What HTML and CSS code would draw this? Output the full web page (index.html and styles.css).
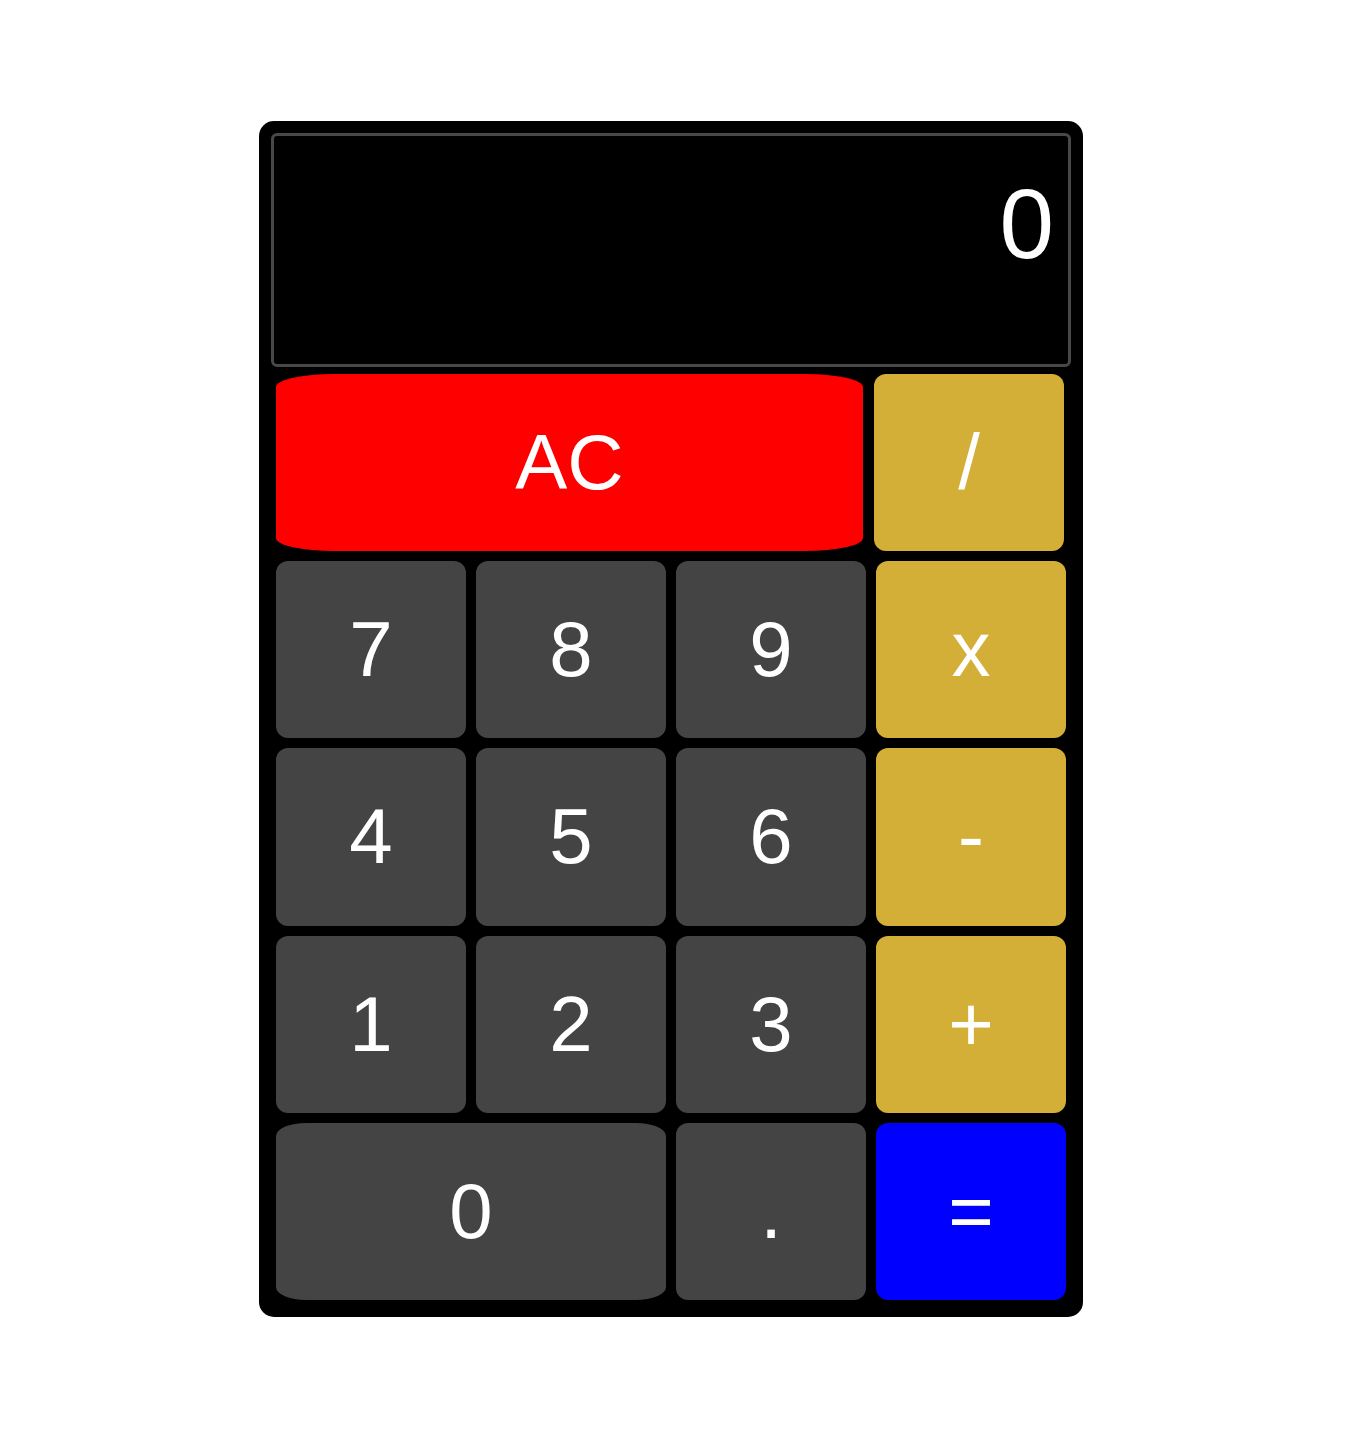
FILE: index.html
```html
<!DOCTYPE html>
<html lang="en">
<head>
<meta charset="utf-8">
<title>Calculator</title>
<link rel="stylesheet" href="styles.css">
</head>
<body>
<div class="calculator">
  <div class="display">0</div>
  <div class="keys">
    <button class="key key-clear">AC</button>
    <button class="key key-op key-divide">/</button>
    <button class="key">7</button>
    <button class="key">8</button>
    <button class="key">9</button>
    <button class="key key-op">x</button>
    <button class="key">4</button>
    <button class="key">5</button>
    <button class="key">6</button>
    <button class="key key-op">-</button>
    <button class="key">1</button>
    <button class="key">2</button>
    <button class="key">3</button>
    <button class="key key-op">+</button>
    <button class="key key-zero">0</button>
    <button class="key">.</button>
    <button class="key key-equals">=</button>
  </div>
</div>
</body>
</html>
```

FILE: styles.css
```css
* {
  box-sizing: border-box;
}

html, body {
  margin: 0;
  padding: 0;
  background: #ffffff;
  font-family: "Liberation Sans", Arial, sans-serif;
}

body {
  padding-top: 121px;
  padding-left: 259px;
}

.calculator {
  width: 824px;
  height: 1196px;
  background: #000000;
  border-radius: 15px;
  padding: 12px;
}

.display {
  height: 234px;
  border: 3px solid #484848;
  border-radius: 6px;
  background: #000000;
  color: #ffffff;
  font-size: 98px;
  line-height: 113px;
  text-align: right;
  padding: 32px 14px 0 0;
  margin-bottom: 2px;
}

.keys {
  display: grid;
  grid-template-columns: repeat(4, 200px);
  grid-template-rows: repeat(5, 187.2px);
}

.key {
  margin: 5px;
  border: none;
  background: #444444;
  color: #ffffff;
  font-family: "Liberation Sans", Arial, sans-serif;
  font-size: 78px;
  border-radius: 12px;
  padding: 0;
  display: flex;
  align-items: center;
  justify-content: center;
}

.key-op {
  background: #d4af37;
}

.key-clear {
  grid-column: span 3;
  background: #ff0000;
  width: 587px;
  border-radius: 58px / 13px;
}

.key-divide {
  margin-left: 3px;
  margin-right: 7px;
}

.key-zero {
  grid-column: span 2;
  border-radius: 30px / 13px;
}

.key-equals {
  background: #0000ff;
}
```
